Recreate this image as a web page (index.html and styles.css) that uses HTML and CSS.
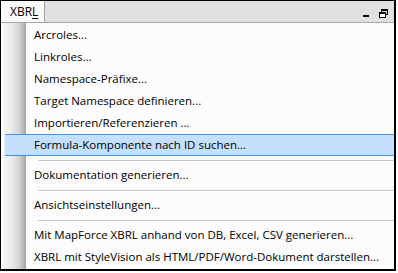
FILE: index.html
```html
<!DOCTYPE html>
<html>
<head>
<meta charset="utf-8">
<link rel="stylesheet" href="styles.css">
</head>
<body>
<div class="frame">
  <div class="menubar">
    <div class="tab">XBR<u>L</u></div>
    <div class="controls">
      <span class="min"></span>
      <svg class="restore" width="9" height="9" viewBox="0 0 9 9">
        <rect x="2.5" y="0.5" width="6" height="5" fill="none" stroke="#000"/>
        <rect x="2" y="0" width="7" height="2" fill="#000"/>
        <rect x="0.5" y="3.5" width="6" height="5" fill="#fff" stroke="#000"/>
        <rect x="0" y="3" width="7" height="2" fill="#000"/>
      </svg>
    </div>
  </div>
  <div class="menu">
    <div class="item">Arcroles...</div>
    <div class="item">Linkroles...</div>
    <div class="item">Namespace-Präfixe...</div>
    <div class="item">Target Namespace definieren...</div>
    <div class="item">Importieren/Referenzieren ...</div>
    <div class="item active">Formula-Komponente nach ID suchen...</div>
    <div class="sep"></div>
    <div class="item">Dokumentation generieren...</div>
    <div class="sep"></div>
    <div class="item">Ansichtseinstellungen...</div>
    <div class="sep"></div>
    <div class="item">Mit MapForce XBRL anhand von DB, Excel, CSV generieren...</div>
    <div class="item">XBRL mit StyleVision als HTML/PDF/Word-Dokument darstellen...</div>
  </div>
</div>
</body>
</html>
```
FILE: styles.css
```css
html, body {
  margin: 0;
  padding: 0;
  background: #fff;
}
body {
  font-family: "Open Sans", "Noto Sans", sans-serif;
  font-size: 11.5px;
  color: #000;
}
.frame {
  width: 393px;
  height: 268px;
  border-top: 1px solid #000;
  border-left: 1px solid #000;
  border-right: 2px solid #000;
  border-bottom: 2px solid #000;
  background: #fcfcfc;
  display: flex;
  flex-direction: column;
  overflow: hidden;
}
.menubar {
  height: 21px;
  background: #e0e0e0;
  border-bottom: 1px solid #a8a8a8;
  display: flex;
  align-items: stretch;
  justify-content: space-between;
}
.tab {
  width: 34px;
  padding-left: 9px;
  background: #fafafa;
  border-right: 1px solid #a0a0a0;
  line-height: 21px;
  font-size: 12px;
}
.tab u {
  text-decoration-thickness: 1px;
  text-underline-offset: 2px;
}
.controls {
  display: flex;
  align-items: center;
  gap: 10px;
  padding-right: 6px;
  padding-top: 4px;
}
.min {
  width: 6px;
  height: 2px;
  background: #000;
  margin-top: 5px;
}
.restore {
  display: block;
}
.menu {
  flex: 1;
  padding-top: 1px;
  padding-left: 2px;
  background:
    linear-gradient(to right, #f6f6f6 0px, #ededed 8px, #d4d4d4 16px, #a4a4a4 23px, #fcfcfc 23px) no-repeat 2px 0 / 24px 100%,
    #fcfcfc;
}
.item {
  height: 22px;
  line-height: 22px;
  padding-left: 31px;
  white-space: nowrap;
  color: #000;
}
.item.active {
  margin-left: 2px;
  padding-left: 29px;
  height: 20px;
  line-height: 20px;
  background: #c4e0fc;
  border-top: 1px solid #3b95f0;
  border-bottom: 1px solid #3b95f0;
}
.sep {
  height: 8px;
  margin-left: 35px;
  display: flex;
  align-items: center;
}
.sep::before {
  content: "";
  flex: 1;
  height: 1px;
  background: #c8c8c8;
  box-shadow: 0 1px 0 #fff;
}
```
